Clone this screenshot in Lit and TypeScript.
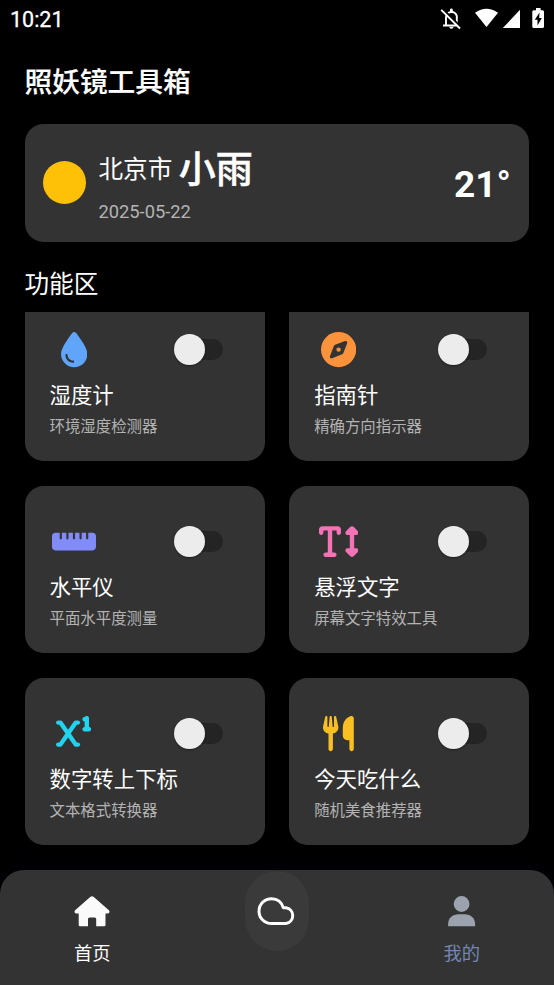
import { LitElement, html, css, svg } from "lit";
import { customElement, property } from "lit/decorators.js";

interface Tool {
  name: string;
  desc: string;
  color: string;
  width: number;
  path: string;
}

const TOOLS: Tool[] = [
  {
    name: "湿度计", desc: "环境湿度检测器", color: "#60a5fa", width: 384,
    path: "M192 512C86 512 0 426 0 320C0 228.8 130.2 57.7 166.6 11.7C172.6 4.2 181.5 0 191.1 0h1.8c9.6 0 18.5 4.2 24.5 11.7C253.8 57.7 384 228.8 384 320c0 106-86 192-192 192zM96 336c0-8.8-7.2-16-16-16s-16 7.2-16 16c0 61.9 50.1 112 112 112c8.8 0 16-7.2 16-16s-7.2-16-16-16c-44.2 0-80-35.8-80-80z",
  },
  {
    name: "指南针", desc: "精确方向指示器", color: "#fb923c", width: 512,
    path: "M256 512A256 256 0 1 0 256 0a256 256 0 1 0 0 512zm50.7-186.9L162.4 380.6c-19.4 7.5-38.5-11.6-31-31l55.5-144.3c3.3-8.5 9.9-15.1 18.4-18.4l144.3-55.5c19.4-7.5 38.5 11.6 31 31L325.1 306.7c-3.2 8.5-9.9 15.1-18.4 18.4zM288 256a32 32 0 1 0 -64 0 32 32 0 1 0 64 0z",
  },
  {
    name: "水平仪", desc: "平面水平度测量", color: "#818cf8", width: 640,
    path: "M0 336c0 26.500 21.500 48 48 48H592c26.500 0 48-21.500 48-48V176c0-26.500-21.500-48-48-48H528v80c0 8.800-7.200 16-16 16s-16-7.200-16-16V128H432v80c0 8.800-7.200 16-16 16s-16-7.200-16-16V128H336v80c0 8.800-7.200 16-16 16s-16-7.200-16-16V128H240v80c0 8.800-7.200 16-16 16s-16-7.200-16-16V128H144v80c0 8.800-7.200 16-16 16s-16-7.200-16-16V128H48c-26.500 0-48 21.500-48 48V336z",
  },
  {
    name: "悬浮文字", desc: "屏幕文字特效工具", color: "#f472b6", width: 576,
    path: "M64 128V96h64l0 320H96c-17.700 0-32 14.300-32 32s14.300 32 32 32H224c17.700 0 32-14.300 32-32s-14.300-32-32-32H192l0-320h64v32c0 17.700 14.300 32 32 32s32-14.300 32-32V80c0-26.500-21.500-48-48-48H160 48C21.500 32 0 53.500 0 80v48c0 17.700 14.300 32 32 32s32-14.300 32-32zM502.600 41.400c-12.500-12.500-32.800-12.500-45.300 0l-64 64c-9.200 9.200-11.900 22.900-6.900 34.900s16.600 19.800 29.600 19.800h32V352H416c-12.900 0-24.600 7.800-29.600 19.800s-2.200 25.700 6.900 34.900l64 64c12.500 12.500 32.800 12.500 45.300 0l64-64c9.200-9.200 11.900-22.900 6.900-34.900s-16.600-19.800-29.600-19.800H512V160h32c12.900 0 24.600-7.800 29.600-19.800s2.200-25.700-6.900-34.900l-64-64z",
  },
  {
    name: "数字转上下标", desc: "文本格式转换器", color: "#22d3ee", width: 512,
    path: "M480 32c0-11.100-5.700-21.400-15.200-27.200s-21.200-6.400-31.100-1.400l-32 16c-15.800 7.900-22.200 27.100-14.300 42.900C393 73.500 404.300 80 416 80v80c-17.700 0-32 14.300-32 32s14.300 32 32 32h32 32c17.700 0 32-14.300 32-32s-14.300-32-32-32V32zM32 64C14.300 64 0 78.300 0 96s14.300 32 32 32H47.300l89.600 128L47.300 384H32c-17.700 0-32 14.300-32 32s14.300 32 32 32H64c10.400 0 20.200-5.100 26.200-13.600L176 311.800l85.800 122.600c6 8.600 15.800 13.600 26.200 13.600h32c17.700 0 32-14.300 32-32s-14.300-32-32-32H304.700L215.100 256l89.600-128H320c17.700 0 32-14.300 32-32s-14.300-32-32-32H288c-10.400 0-20.200 5.100-26.200 13.600L176 200.200 90.200 77.600C84.200 69.100 74.400 64 64 64H32z",
  },
  {
    name: "今天吃什么", desc: "随机美食推荐器", color: "#fbbf24", width: 448,
    path: "M416 0C400 0 288 32 288 176V288c0 35.3 28.7 64 64 64h32V480c0 17.700 14.300 32 32 32s32-14.300 32-32V352 240 32c0-17.700-14.300-32-32-32zM64 16C64 7.800 57.900 1 49.700 .1S34.200 4.600 32.400 12.500L2.100 148.800C.7 155.100 0 161.500 0 167.900c0 45.900 35.100 83.600 80 87.700V480c0 17.700 14.300 32 32 32s32-14.300 32-32V255.600c44.900-4.100 80-41.800 80-87.700c0-6.400-.7-12.800-2.100-19.100L191.600 12.500c-1.800-8-9.300-13.300-17.400-12.400S160 7.800 160 16V150.200c0 5.400-4.400 9.800-9.800 9.800c-5.100 0-9.300-3.900-9.800-9L127.900 14.600C127.200 6.300 120.300 0 112 0s-15.200 6.300-15.900 14.600L83.700 151c-.5 5.100-4.700 9-9.800 9c-5.400 0-9.800-4.400-9.800-9.800V16z",
  },
];

@customElement("tool-card")
class ToolCard extends LitElement {
  @property({ attribute: false }) tool!: Tool;

  static styles = css`
    :host {
      display: block;
      box-sizing: border-box;
      height: 167px;
      padding: 31.500px 42.100px 0 24.900px;
      border-radius: 18.5px;
      background: #333;
    }
    .head { display: flex; align-items: center; justify-content: space-between; height: 48px; }
    .icon { display: flex; justify-content: center; width: 48.400px; padding-top: 1px; }
    .icon svg { display: block; height: 35.2px; }
    .switch {
      display: flex;
      align-items: center;
      box-sizing: border-box;
      width: 48.800px;
      height: 21.500px;
      border-radius: 11px;
      background: #242424;
    }
    .thumb {
      flex: none;
      width: 31px;
      height: 31px;
      border-radius: 50%;
      background: #ececec;
      box-shadow: 0 1px 2px rgba(0, 0, 0, 0.45);
    }
    .name { font-size: 21.4px; line-height: 32px; margin-top: 6.500px; color: #fff; white-space: nowrap; }
    .desc { font-size: 15.4px; line-height: 22px; margin-top: 4px; color: #b3b3b3; white-space: nowrap; }
  `;

  render() {
    const t = this.tool;
    return html`
      <div class="head">
        <div class="icon">
          <svg viewBox="0 0 ${t.width} 512" fill=${t.color}>${svg`<path d=${t.path}></path>`}</svg>
        </div>
        <div class="switch"><div class="thumb"></div></div>
      </div>
      <div class="name">${t.name}</div>
      <div class="desc">${t.desc}</div>
    `;
  }
}

@customElement("app-root")
class AppRoot extends LitElement {
  static styles = css`
    :host {
      display: flex;
      flex-direction: column;
      width: 554px;
      height: 985px;
      overflow: hidden;
      background: #000;
      color: #fff;
      font-family: Roboto, "Noto Sans CJK SC", sans-serif;
    }
    .status {
      display: flex;
      align-items: center;
      justify-content: space-between;
      flex: none;
      height: 38px;
      padding: 0 9px 0 10px;
      font-size: 21.5px;
      font-weight: 400;
      -webkit-text-stroke: 0.300px #fff;
    }
    .indicators { display: block; width: 106px; height: 24px; }
    .title {
      flex: none;
      margin: 25px 24.500px 0;
      font-size: 27.7px;
      line-height: 40px;
      font-weight: 500;
      -webkit-text-stroke: 0.200px #fff;
    }
    .weather {
      display: flex;
      align-items: center;
      flex: none;
      box-sizing: border-box;
      height: 117.500px;
      margin: 21px 24.700px 0;
      padding: 0 18.500px;
      border-radius: 18.500px;
      background: #333;
    }
    .sun { flex: none; width: 43px; height: 43px; border-radius: 50%; background: #ffc107; }
    .info { flex: 1; margin-left: 12.300px; }
    .place { display: flex; align-items: center; gap: 6.500px; height: 52px; line-height: 52px; }
    .city { font-size: 24.600px; padding-top: 3px; }
    .sky { font-size: 37px; font-weight: 500; padding-top: 5px; -webkit-text-stroke: 0.500px #fff; }
    .date { margin-top: 7px; font-size: 18.300px; line-height: 22px; color: #b3b3b3; }
    .temp { font-size: 37px; line-height: 44px; font-weight: 700; padding-top: 4px; }
    .section { flex: none; margin: 25px 24.500px 0; font-size: 24.600px; line-height: 36px; }
    .scroll {
      display: flex;
      flex-direction: column;
      justify-content: flex-end;
      flex: 1;
      min-height: 0;
      margin-top: 9.500px;
      padding: 0 24.700px;
      overflow: hidden;
    }
    .grid { display: grid; grid-template-columns: 1fr 1fr; gap: 25px 24.600px; padding-bottom: 25px; }
    .nav {
      display: grid;
      grid-template-columns: 1fr 1fr 1fr;
      flex: none;
      height: 115px;
      border-radius: 24px 24px 0 0;
      background: #333;
      box-shadow: 0 -8px 10px #020106;
    }
    .item { display: flex; flex-direction: column; align-items: center; padding-top: 23px; }
    .item svg { display: block; width: 40px; height: 37px; }
    .label { margin-top: 10px; font-size: 18.300px; line-height: 27px; }
    .mine { color: #7486b4; }
    .pill {
      display: flex;
      align-items: center;
      justify-content: center;
      justify-self: center;
      width: 64px;
      height: 80px;
      margin-top: 1px;
      border-radius: 32px;
      background: #3a3a3a;
    }
    .pill svg { display: block; width: 40px; height: 32px; }
  `;

  render() {
    return html`
      <div class="status">
        <span>10:21</span>
        <svg class="indicators" viewBox="439 7 106 24" fill="#fff">
          <path d="M446 25V17.500a5.500 5.500 0 0 1 10.800-1.500V25M443 25.500h14.500" fill="none" stroke="#fff" stroke-width="1.900" />
          <path d="M450 12.500V10a1.400 1.400 0 0 1 2.800 0v2.500zM449.300 26.800h4.200a2.100 1.900 0 0 1-4.200 0z" />
          <path d="M442.300 8.500L461.500 27.500" stroke="#000" stroke-width="1.800" />
          <path d="M441.200 9.900L460 28.500" stroke="#fff" stroke-width="1.900" />
          <path d="M475 12.800Q486.500 4.800 498 12.800L486.500 27z" />
          <path d="M520 9.800V28H502.800z" />
          <path fill-rule="evenodd" d="M534 10.200h2V8h4.600v2.200h2a1.500 1.500 0 0 1 1.400 1.500v14.800a1.500 1.500 0 0 1-1.500 1.500h-8.700a1.500 1.500 0 0 1-1.500-1.500V11.700a1.500 1.500 0 0 1 1.700-1.500zM539.500 12.500l-4.700 7.300h2.700V25.500l4.300-7.500h-2.600z" />
        </svg>
      </div>
      <div class="title">照妖镜工具箱</div>
      <div class="weather">
        <div class="sun"></div>
        <div class="info">
          <div class="place"><span class="city">北京市</span><span class="sky">小雨</span></div>
          <div class="date">2025-05-22</div>
        </div>
        <div class="temp">21°</div>
      </div>
      <div class="section">功能区</div>
      <div class="scroll">
        <div class="grid">${TOOLS.map((t) => html`<tool-card .tool=${t}></tool-card>`)}</div>
      </div>
      <div class="nav">
        <div class="item">
          <svg viewBox="0 0 40 37" fill="#fafafa">
            <path d="M20 3.200Q20.800 3.200 21.500 3.800L36.900 17.200Q38 18.300 37.200 19.800Q36.800 20.400 35.600 20.400H33.500V32Q33.500 33.300 32.200 33.300H24.200V26Q24.200 24.500 22.700 24.500H17.500Q16 24.500 16 26V33.300H8Q6.700 33.300 6.700 32V20.400H4.400Q3.200 20.400 2.800 19.800Q2 18.300 3.100 17.200L18.500 3.800Q19.200 3.200 20 3.200z" />
          </svg>
          <div class="label">首页</div>
        </div>
        <div class="pill">
          <svg viewBox="0.500 0 40 32" fill="none" stroke="#fff" stroke-width="3" stroke-linejoin="round">
            <path d="M15.200 3.700C8 3.700 2.500 9 2.500 16.300C2.500 23.200 8 28.500 15.200 28.500H29.500A8 8 0 0 0 29.500 12.700C28.500 12.600 27.700 12.700 26.700 12.700C25.300 7.500 21 3.700 15.200 3.700z" />
          </svg>
        </div>
        <div class="item mine">
          <svg viewBox="0.400 0 40 37" fill="#9ca3af">
            <circle cx="20" cy="11" r="7.900" />
            <path d="M6.500 33.300V31.500C6.500 25 11 21.300 17 21.300H23C29 21.300 33.500 25 33.500 31.500V33.300z" />
          </svg>
          <div class="label">我的</div>
        </div>
      </div>
    `;
  }
}
